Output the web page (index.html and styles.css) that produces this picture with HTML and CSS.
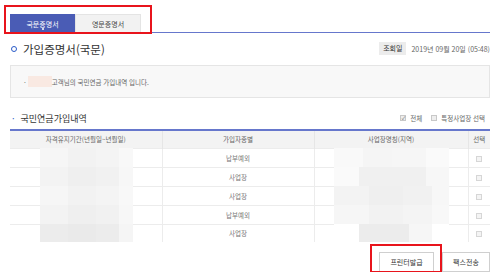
FILE: index.html
```html
<!DOCTYPE html>
<html lang="ko">
<head>
    <meta charset="UTF-8">
    <title>가입증명서(국문)</title>
    <link rel="stylesheet" href="styles.css">
</head>
<body>
    <div class="page">
        <!-- 탭 -->
        <div class="tabs">
            <div class="tab active">국문증명서<span class="tab-dot"></span></div>
            <div class="tab">영문증명서</div>
            <div class="mark mark-tabs"></div>
        </div>

        <!-- 제목 -->
        <div class="title-row">
            <h1 class="title"><span class="ring"></span>가입증명서(국문)</h1>
            <div class="date">
                <span class="date-label">조회일</span>
                <span class="date-value">2019년 09월 20일 (05:48)</span>
            </div>
        </div>

        <div class="info">
            <span class="dot">·</span><span class="masked"></span>고객님의 국민연금 가입내역 입니다.
        </div>

        <div class="section-row">
            <h2 class="section-title"><span class="dot">·</span>국민연금가입내역</h2>
            <div class="options">
                <label><span class="check checked">✓</span>전체</label>
                <label><span class="check"></span>특정사업장 선택</label>
            </div>
        </div>

        <table class="grid">
            <colgroup>
                <col class="c1"><col class="c2"><col class="c3"><col class="c4">
            </colgroup>
            <thead>
                <tr>
                    <th>자격유지기간(년월일~년월일)</th>
                    <th>가입자종별</th>
                    <th>사업장명칭(지역)</th>
                    <th>선택</th>
                </tr>
            </thead>
            <tbody>
                <tr>
                    <td class="blur-cell"><span class="blur b1"></span></td>
                    <td>납부예외</td>
                    <td class="blur-cell"><span class="blur b3 first"></span></td>
                    <td><span class="box"></span></td>
                </tr>
                <tr>
                    <td class="blur-cell"><span class="blur b2"></span></td>
                    <td>사업장</td>
                    <td class="blur-cell"><span class="blur b4"></span></td>
                    <td><span class="box"></span></td>
                </tr>
                <tr>
                    <td class="blur-cell"><span class="blur b1"></span></td>
                    <td>사업장</td>
                    <td class="blur-cell"><span class="blur b2"></span></td>
                    <td><span class="box"></span></td>
                </tr>
                <tr>
                    <td class="blur-cell"><span class="blur b2"></span></td>
                    <td>납부예외</td>
                    <td class="blur-cell"><span class="blur b1"></span></td>
                    <td><span class="box"></span></td>
                </tr>
                <tr>
                    <td class="blur-cell"><span class="blur b5"></span></td>
                    <td>사업장</td>
                    <td class="blur-cell"><span class="blur b6"></span></td>
                    <td><span class="box"></span></td>
                </tr>
            </tbody>
        </table>

        <div class="actions">
            <button class="btn">프린터발급</button>
            <button class="btn">팩스전송</button>
            <div class="mark mark-print"></div>
        </div>
    </div>
</body>
</html>
```

FILE: styles.css
```css
* { margin: 0; padding: 0; box-sizing: border-box; }
body { font-family: 'Noto Sans CJK KR', 'Noto Sans', sans-serif; background: #fff; color: #555; }
.page { width: 500px; padding: 0 10px; }

.tabs { position: relative; display: flex; margin-top: 14px; height: 19px; border-bottom: 1px solid #6677cc; }
.tab { position: relative; height: 18px; line-height: 18px; font-size: 7px; text-align: center; background: #f2f2f2; color: #444; border: 1px solid #e4e4e4; border-bottom: none; }
.tab:first-child { width: 65px; }
.tab:nth-child(2) { width: 66px; }
.tab.active { background: #4a5cb5; color: #fff; border-color: #4a5cb5; }
.tab-dot { position: absolute; left: 31px; bottom: 2px; width: 2px; height: 2px; background: #fff; border-radius: 50%; }

.mark { position: absolute; border: 2px solid #e8141c; }
.mark-tabs { left: -6px; top: -9px; width: 148px; height: 29px; }

.title-row { display: flex; align-items: center; justify-content: space-between; margin-top: 8px; height: 15px; }
.title { display: flex; align-items: center; font-size: 11.5px; font-weight: normal; color: #333; }
.ring { width: 6px; height: 6px; border: 1.5px solid #2a5bc8; border-radius: 50%; margin: 0 6px 0 1px; }
.date { display: flex; align-items: center; font-size: 7px; color: #666; }
.date-label { background: #ececec; color: #333; padding: 0 4px; height: 13px; line-height: 13px; margin-right: 5px; }

.info { display: flex; align-items: center; margin-top: 9px; height: 33px; background: #f8f8f8; border: 1px solid #e5e5e5; padding-left: 13px; font-size: 6.5px; color: #666; }
.info .dot { margin-right: 2px; }
.masked { width: 24px; height: 11px; background: #f9e9e2; }

.section-row { display: flex; align-items: center; justify-content: space-between; margin-top: 12px; height: 16px; }
.section-title { display: flex; align-items: center; font-size: 9px; font-weight: normal; color: #333; }
.section-title .dot { color: #2a5bc8; margin: 0 6px 0 2px; font-size: 9px; }
.options { display: flex; gap: 9px; font-size: 6.5px; color: #666; padding-right: 5px; }
.options label { display: flex; align-items: center; }
.check { display: inline-block; width: 6px; height: 6px; border: 1px solid #c8c8c8; background: #eee; margin-right: 4px; font-size: 5px; line-height: 4px; text-align: center; color: #555; }

.grid { width: 480px; margin-top: 3px; border-collapse: collapse; table-layout: fixed; border-top: 2px solid #6677cc; font-size: 6.5px; color: #777; }
.c1 { width: 152px; } .c2 { width: 152px; } .c3 { width: 154px; } .c4 { width: 22px; }
.grid th { height: 18px; background: #f3f3f3; font-weight: normal; color: #666; border-left: 1px solid #e6e6e6; }
.grid td { height: 19px; text-align: center; border-top: 1px solid #ececec; border-left: 1px solid #ececec; }
.grid th:first-child, .grid td:first-child { border-left: none; }
.grid tbody tr:last-child td { height: 18px; }
.grid td.blur-cell { padding: 0; position: relative; text-align: left; }
.blur { position: absolute; top: -1px; bottom: 0; display: block; }
.grid td:first-child .blur { left: 30px; width: 93px; }
.grid td:nth-child(3) .blur { left: 19px; width: 115px; }
.b1 { background: linear-gradient(90deg, #f6f6f6 0 30%, #f2f2f2 30% 60%, #f4f4f4 60% 85%, #f8f8f8 85%); }
.b2 { background: linear-gradient(90deg, #f3f3f3 0 30%, #efefef 30% 60%, #f1f1f1 60% 85%, #f7f7f7 85%); }
.b3 { background: linear-gradient(90deg, #f9f9f9 0 25%, #f5f5f5 25% 50%, #f6f6f6 50% 80%, #fafafa 80%); }
.b4 { background: linear-gradient(90deg, #fafafa 0 22%, #f0f0f0 22% 80%, #f7f7f7 80%); }
.b5 { background: linear-gradient(90deg, #ececec 0 30%, #eaeaea 30% 60%, #ececec 60% 85%, #f5f5f5 85%); }
.b6 { background: linear-gradient(90deg, #fff 0 22%, #ececec 22% 65%, #f6f6f6 65% 85%, #fff 85%); }
.box { display: inline-block; width: 6px; height: 6px; border: 1px solid #d6d6d6; background: #f4f4f4; vertical-align: middle; }

.actions { position: relative; display: flex; justify-content: flex-end; gap: 8px; margin-top: 10px; }
.btn { height: 20px; padding: 0 9px; font-family: inherit; font-size: 7px; color: #333; background: #fff; border: 1px solid #cfcfcf; }
.btn:first-child { width: 55px; }
.btn:nth-child(2) { width: 48px; padding: 0; }
.mark-print { right: 48px; top: -8px; width: 72px; height: 29px; }
```
